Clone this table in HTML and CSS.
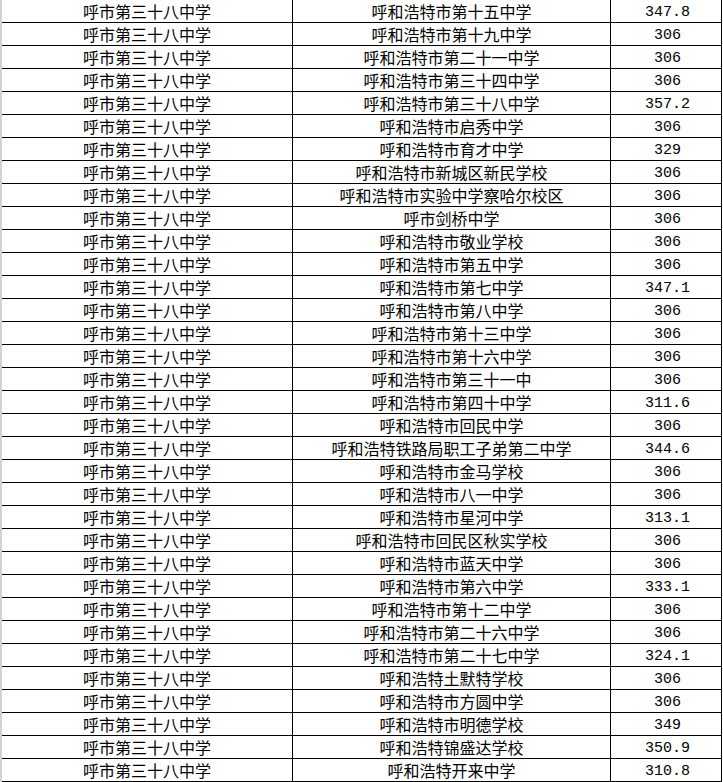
FILE: index.html
```html
<!DOCTYPE html>
<html lang="zh">
<head>
<meta charset="utf-8">
<link rel="stylesheet" href="styles.css">
</head>
<body>
<div class="sheet">
  <div class="row"><div class="c1">呼市第三十八中学</div><div class="c2">呼和浩特市第十五中学</div><div class="c3">347.8</div></div>
  <div class="row"><div class="c1">呼市第三十八中学</div><div class="c2">呼和浩特市第十九中学</div><div class="c3">306</div></div>
  <div class="row"><div class="c1">呼市第三十八中学</div><div class="c2">呼和浩特市第二十一中学</div><div class="c3">306</div></div>
  <div class="row"><div class="c1">呼市第三十八中学</div><div class="c2">呼和浩特市第三十四中学</div><div class="c3">306</div></div>
  <div class="row"><div class="c1">呼市第三十八中学</div><div class="c2">呼和浩特市第三十八中学</div><div class="c3">357.2</div></div>
  <div class="row"><div class="c1">呼市第三十八中学</div><div class="c2">呼和浩特市启秀中学</div><div class="c3">306</div></div>
  <div class="row"><div class="c1">呼市第三十八中学</div><div class="c2">呼和浩特市育才中学</div><div class="c3">329</div></div>
  <div class="row"><div class="c1">呼市第三十八中学</div><div class="c2">呼和浩特市新城区新民学校</div><div class="c3">306</div></div>
  <div class="row"><div class="c1">呼市第三十八中学</div><div class="c2">呼和浩特市实验中学察哈尔校区</div><div class="c3">306</div></div>
  <div class="row"><div class="c1">呼市第三十八中学</div><div class="c2">呼市剑桥中学</div><div class="c3">306</div></div>
  <div class="row"><div class="c1">呼市第三十八中学</div><div class="c2">呼和浩特市敬业学校</div><div class="c3">306</div></div>
  <div class="row"><div class="c1">呼市第三十八中学</div><div class="c2">呼和浩特市第五中学</div><div class="c3">306</div></div>
  <div class="row"><div class="c1">呼市第三十八中学</div><div class="c2">呼和浩特市第七中学</div><div class="c3">347.1</div></div>
  <div class="row"><div class="c1">呼市第三十八中学</div><div class="c2">呼和浩特市第八中学</div><div class="c3">306</div></div>
  <div class="row"><div class="c1">呼市第三十八中学</div><div class="c2">呼和浩特市第十三中学</div><div class="c3">306</div></div>
  <div class="row"><div class="c1">呼市第三十八中学</div><div class="c2">呼和浩特市第十六中学</div><div class="c3">306</div></div>
  <div class="row"><div class="c1">呼市第三十八中学</div><div class="c2">呼和浩特市第三十一中</div><div class="c3">306</div></div>
  <div class="row"><div class="c1">呼市第三十八中学</div><div class="c2">呼和浩特市第四十中学</div><div class="c3">311.6</div></div>
  <div class="row"><div class="c1">呼市第三十八中学</div><div class="c2">呼和浩特市回民中学</div><div class="c3">306</div></div>
  <div class="row"><div class="c1">呼市第三十八中学</div><div class="c2">呼和浩特铁路局职工子弟第二中学</div><div class="c3">344.6</div></div>
  <div class="row"><div class="c1">呼市第三十八中学</div><div class="c2">呼和浩特市金马学校</div><div class="c3">306</div></div>
  <div class="row"><div class="c1">呼市第三十八中学</div><div class="c2">呼和浩特市八一中学</div><div class="c3">306</div></div>
  <div class="row"><div class="c1">呼市第三十八中学</div><div class="c2">呼和浩特市星河中学</div><div class="c3">313.1</div></div>
  <div class="row"><div class="c1">呼市第三十八中学</div><div class="c2">呼和浩特市回民区秋实学校</div><div class="c3">306</div></div>
  <div class="row"><div class="c1">呼市第三十八中学</div><div class="c2">呼和浩特市蓝天中学</div><div class="c3">306</div></div>
  <div class="row"><div class="c1">呼市第三十八中学</div><div class="c2">呼和浩特市第六中学</div><div class="c3">333.1</div></div>
  <div class="row"><div class="c1">呼市第三十八中学</div><div class="c2">呼和浩特市第十二中学</div><div class="c3">306</div></div>
  <div class="row"><div class="c1">呼市第三十八中学</div><div class="c2">呼和浩特市第二十六中学</div><div class="c3">306</div></div>
  <div class="row"><div class="c1">呼市第三十八中学</div><div class="c2">呼和浩特市第二十七中学</div><div class="c3">324.1</div></div>
  <div class="row"><div class="c1">呼市第三十八中学</div><div class="c2">呼和浩特土默特学校</div><div class="c3">306</div></div>
  <div class="row"><div class="c1">呼市第三十八中学</div><div class="c2">呼和浩特市方圆中学</div><div class="c3">306</div></div>
  <div class="row"><div class="c1">呼市第三十八中学</div><div class="c2">呼和浩特市明德学校</div><div class="c3">349</div></div>
  <div class="row"><div class="c1">呼市第三十八中学</div><div class="c2">呼和浩特锦盛达学校</div><div class="c3">350.9</div></div>
  <div class="row"><div class="c1">呼市第三十八中学</div><div class="c2">呼和浩特开来中学</div><div class="c3">310.8</div></div>
</div>
</body>
</html>
```
FILE: styles.css
```css
html, body {
  margin: 0;
  padding: 0;
  background: #ffffff;
}
body {
  width: 723px;
  height: 782px;
  overflow: hidden;
  font-family: "Noto Sans CJK SC", "Noto Sans", sans-serif;
  font-size: 16px;
  color: #000000;
}
.sheet {
  border-left: 2px solid #d2d2d2;
  width: 720px;
}
.row {
  display: grid;
  grid-template-columns: 291px 318px 111px;
  height: 23px;
  box-sizing: border-box;
  border-bottom: 1px solid #000000;
}
.row > div {
  box-sizing: border-box;
  border-right: 1px solid #000000;
  text-align: center;
  line-height: 22px;
  white-space: nowrap;
  overflow: hidden;
}
.c3 {
  font-family: "Liberation Mono", "DejaVu Sans Mono", monospace;
  font-size: 15px;
  padding-top: 2px;
  padding-left: 3px;
}
```
